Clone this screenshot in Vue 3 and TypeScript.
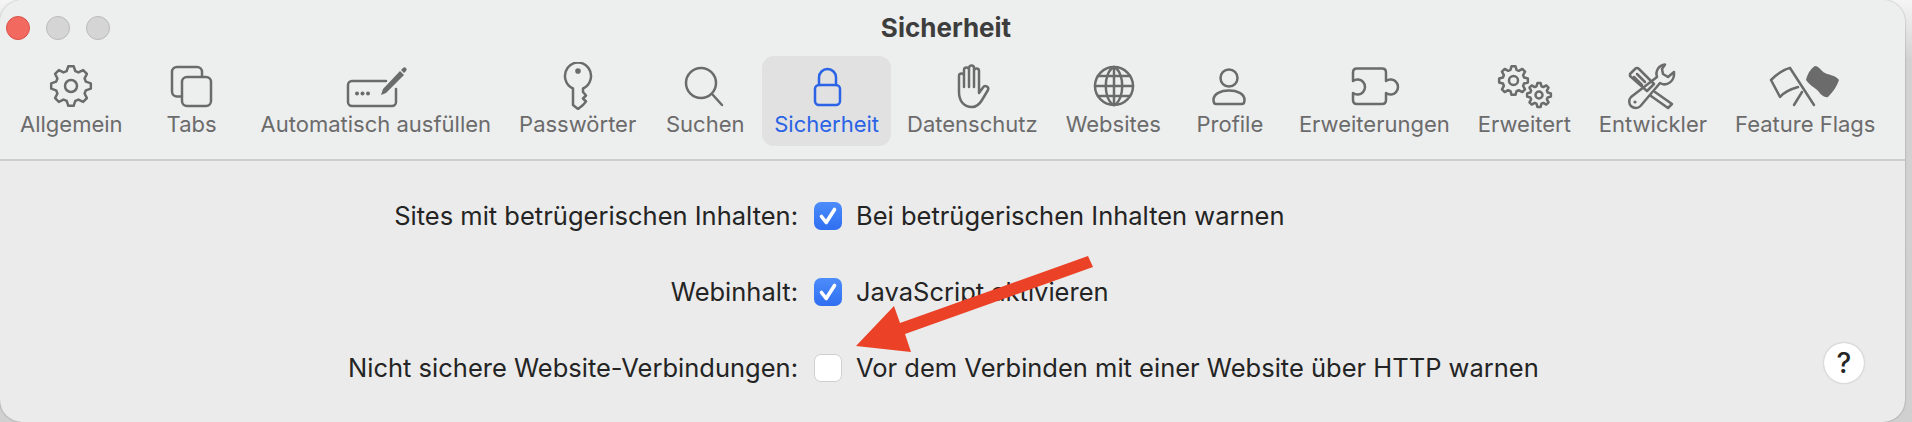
<script setup lang="ts">
interface ToolIcon {
  label: string
  lines: string[]
  solid?: string[]
  active?: boolean
}

interface SettingRow {
  label: string
  text: string
  checked: boolean
}

function circle(cx: number, cy: number, r: number): string {
  return `M${cx - r} ${cy}a${r} ${r} 0 1 0 ${r * 2} 0a${r} ${r} 0 1 0 ${-r * 2} 0Z`
}

function gear(cx: number, cy: number, outer: number, inner: number, teeth = 8): string {
  const step = (Math.PI * 2) / teeth
  const pts: string[] = []
  for (let i = 0; i < teeth; i++) {
    const a = i * step - Math.PI / 2
    const pairs: Array<[number, number]> = [
      [a - step * 0.36, inner],
      [a - step * 0.17, outer],
      [a + step * 0.17, outer],
      [a + step * 0.36, inner]
    ]
    for (const [ang, r] of pairs) {
      pts.push(`${(cx + Math.cos(ang) * r).toFixed(2)} ${(cy + Math.sin(ang) * r).toFixed(2)}`)
    }
  }
  return `M${pts.join('L')}Z`
}

const tools: ToolIcon[] = [
  { label: 'Allgemein', lines: [gear(36, 24, 20, 15.5), circle(36, 24, 6)] },
  {
    label: 'Tabs',
    lines: [
      'M25 34.5H21a5 5 0 0 1-5-5V10a5 5 0 0 1 5-5H41a5 5 0 0 1 5 5V14',
      'M31 15H50a5 5 0 0 1 5 5V39a5 5 0 0 1-5 5H31a5 5 0 0 1-5-5V20a5 5 0 0 1 5-5Z'
    ]
  },
  {
    label: 'Automatisch ausfüllen',
    lines: ['M46 19H12a4 4 0 0 0-4 4V40a4 4 0 0 0 4 4H52a4 4 0 0 0 4-4V27'],
    solid: [
      circle(17, 31.5, 2),
      circle(22.5, 31.5, 2),
      circle(28, 31.5, 2),
      'M41 33l2-6L60 9l4 4L46 31ZM61 8l2-2a2 2 0 0 1 3 3l-2 2Z'
    ]
  },
  {
    label: 'Passwörter',
    lines: ['M31 26.5A13 13.5 0 1 1 41 26.5V30L44 33.5L41 36.5L44 39.5L41 43L36 47L31 43Z'],
    solid: [circle(36, 9, 2.8)]
  },
  { label: 'Suchen', lines: [circle(32, 21, 15), 'M43.5 32.5L53 43'] },
  {
    label: 'Sicherheit',
    active: true,
    lines: [
      'M28 23V15.5a8.5 8.5 0 0 1 17 0V23',
      'M28 23H45a4 4 0 0 1 4 4V39a4 4 0 0 1-4 4H28a4 4 0 0 1-4-4V27a4 4 0 0 1 4-4Z'
    ]
  },
  {
    label: 'Datenschutz',
    lines: [
      'M36 45C27 45 23 38 23 30V14a2.5 2.5 0 0 1 5 0V25V8a2.5 2.5 0 0 1 5 0V25V6a2.5 2.5 0 0 1 5 0V25V9a2.5 2.5 0 0 1 5 0V31L47 25.5a2.8 2.8 0 0 1 5 2.5L46 38C43 43 40 45 36 45Z'
    ]
  },
  {
    label: 'Websites',
    lines: [
      circle(37, 24, 19),
      'M37 5V43M18 24H56M21 14H53M21 34H53',
      'M37 5C26 10 26 38 37 43C48 38 48 10 37 5Z'
    ]
  },
  {
    label: 'Profile',
    lines: [
      circle(35, 16, 8.5),
      'M19.5 38C19.5 31.5 27 28.5 35 28.5C43 28.5 50.5 31.5 50.5 38C50.5 41 49.5 42 48 42H22C20.5 42 19.5 41 19.5 38Z'
    ]
  },
  {
    label: 'Erweiterungen',
    lines: [
      'M19 6.5H44Q48 6.5 48 10.5V19a7.5 7.5 0 1 1 0 12V38Q48 42 44 42H19Q15 42 15 38V31a7.5 7.5 0 1 0 0-12V10.5Q15 6.5 19 6.5Z'
    ]
  },
  {
    label: 'Erweitert',
    lines: [
      gear(25.5, 18.5, 14.5, 11),
      circle(25.5, 18.5, 4.5),
      gear(51, 33, 12, 9),
      circle(51, 33, 3.5)
    ]
  },
  {
    label: 'Entwickler',
    lines: [
      'M13 12L18 7Q20 5 22 7L37 22L30 29L13 14Z',
      'M20 12L28 20M17 15L25 23',
      'M38 30L55 42L51 46L34 34',
      'M48 2.5C42 3 38 9 40 15L14 35a6.5 6.5 0 1 0 9.5 9L43 21C50 25 58 19 57 10L51 15L46 12L45 7Z'
    ],
    solid: [circle(18, 40, 1.6)]
  },
  {
    label: 'Feature Flags',
    lines: [
      'M21 6L45 43',
      'M25 43L33 30',
      'M21 6C16 7 8 12 2 18L11 35C15 30 22 27 29 25'
    ],
    solid: ['M46 4C50 4 52 9 56 11C60 13 66 13 70 18C68 24 64 30 59 35C56 36 52 33 50 30C47 26 41 24 37 18C38 13 41 7 46 4Z']
  }
]

const rows: SettingRow[] = [
  {
    label: 'Sites mit betrügerischen Inhalten:',
    text: 'Bei betrügerischen Inhalten warnen',
    checked: true
  },
  { label: 'Webinhalt:', text: 'JavaScript aktivieren', checked: true },
  {
    label: 'Nicht sichere Website-Verbindungen:',
    text: 'Vor dem Verbinden mit einer Website über HTTP warnen',
    checked: false
  }
]
</script>

<template>
  <div class="screen">
    <div class="window">
      <header class="chrome">
        <div class="titlebar">
          <div class="lights">
            <span class="light red"></span>
            <span class="light"></span>
            <span class="light"></span>
          </div>
          <h1 class="title">Sicherheit</h1>
        </div>
        <nav class="toolbar">
          <div v-for="tool in tools" :key="tool.label" class="tool" :class="{ active: tool.active }">
            <svg class="tool-icon" viewBox="0 0 72 48" width="72" height="48">
              <path v-for="d in tool.lines" :key="d" :d="d" class="ln" />
              <path v-for="d in tool.solid ?? []" :key="d" :d="d" class="sd" />
            </svg>
            <span class="tool-label">{{ tool.label }}</span>
          </div>
        </nav>
      </header>

      <main class="content">
        <div class="form">
          <template v-for="row in rows" :key="row.label">
            <span class="row-label">{{ row.label }}</span>
            <span class="box" :class="{ on: row.checked }">
              <svg v-if="row.checked" viewBox="0 0 28 28" width="28" height="28">
                <path d="M7.5 14.5L12.2 20.5L20.5 7.5" class="tick" />
              </svg>
            </span>
            <span class="row-text">{{ row.text }}</span>
          </template>
        </div>
        <button class="help" type="button">?</button>
      </main>
    </div>

    <svg class="arrow" viewBox="0 0 1912 422" width="1912" height="422">
      <path d="M1088 256L1093 267L905 334L911 352L856 346L894 306L900 323Z" fill="#eb4126" />
    </svg>
  </div>
</template>

<style>
html,
body {
  margin: 0;
  overflow: hidden;
}
</style>

<style scoped>
.screen {
  position: relative;
  width: 1912px;
  height: 422px;
  overflow: hidden;
  background: linear-gradient(180deg, #f5f5f5 0, #d2d2d2 60px, #d0d0d0 100%);
  font-family: Inter, "Liberation Sans", sans-serif;
}

.window {
  display: flex;
  flex-direction: column;
  width: 1905px;
  height: 422px;
  box-sizing: border-box;
  border-radius: 22px;
  overflow: hidden;
  background: #ebebeb;
  box-shadow: 0 0 2px rgba(0, 0, 0, 0.35);
}

.chrome {
  height: 161px;
  flex: none;
  box-sizing: border-box;
  background: #edeeee;
  border-bottom: 2px solid #cdcdcd;
}

.titlebar {
  display: grid;
  grid-template-columns: 1fr auto 1fr;
  align-items: center;
  height: 55px;
  padding: 0 19px 0 6px;
}

.lights {
  display: flex;
  gap: 16px;
}

.light {
  width: 22px;
  height: 22px;
  border: 1px solid #b9bab9;
  border-radius: 50%;
  background: #d4d5d4;
}

.light.red {
  border-color: #d9534a;
  background: #f1695f;
}

.title {
  margin: 0;
  font-size: 26px;
  font-weight: 700;
  color: #3d3d3d;
}

.toolbar {
  display: flex;
  gap: 4px;
  height: 90px;
  margin-top: 1px;
  padding-left: 8px;
}

.tool {
  display: flex;
  flex-direction: column;
  align-items: center;
  min-width: 106px;
  box-sizing: border-box;
  padding: 6px 12px 0;
  border-radius: 12px;
  color: #6b6b6b;
}

.tool.active {
  background: #e0e1e0;
  color: #2a63e6;
}

.tool-icon {
  display: block;
  flex: none;
}

.ln {
  fill: none;
  stroke: currentColor;
  stroke-width: 2.5;
  stroke-linejoin: round;
  stroke-linecap: round;
}

.sd {
  fill: currentColor;
}

.tool-label {
  margin-top: 2px;
  font-size: 22px;
  line-height: 24px;
  white-space: nowrap;
}

.content {
  display: flex;
  flex: 1;
  justify-content: space-between;
  align-items: flex-end;
  padding: 41px 41px 39px 0;
}

.form {
  display: grid;
  grid-template-columns: 800px 28px auto;
  column-gap: 14px;
  row-gap: 48px;
  align-items: center;
  align-self: flex-start;
  font-size: 25.5px;
  line-height: 28px;
  color: #242424;
}

.form > * {
  white-space: nowrap;
}

.row-label {
  padding-right: 2px;
  text-align: right;
}

.box {
  width: 28px;
  height: 28px;
  box-sizing: border-box;
  border: 1px solid #cfcfcf;
  border-radius: 7px;
  background: #fff;
}

.box.on {
  border: 0;
  background: linear-gradient(180deg, #4c8cfb, #2f6ff1);
}

.box svg {
  display: block;
}

.tick {
  fill: none;
  stroke: #fff;
  stroke-width: 3.6;
  stroke-linecap: round;
  stroke-linejoin: round;
}

.help {
  width: 40px;
  height: 40px;
  padding: 0;
  border: 0;
  border-radius: 50%;
  background: #fff;
  box-shadow: 0 0 2px rgba(0, 0, 0, 0.3);
  color: #262626;
  font: 500 28px/40px Inter, "Liberation Sans", sans-serif;
}

.arrow {
  position: absolute;
  top: 0;
  left: 0;
  pointer-events: none;
}
</style>
